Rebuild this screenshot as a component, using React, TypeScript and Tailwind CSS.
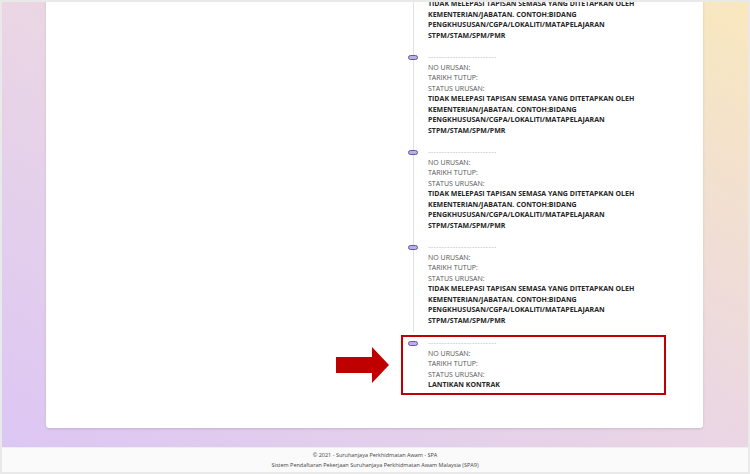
import React from "react";

const longStatus = [
  "TIDAK MELEPASI TAPISAN SEMASA YANG DITETAPKAN OLEH",
  "KEMENTERIAN/JABATAN. CONTOH:BIDANG",
  "PENGKHUSUSAN/CGPA/LOKALITI/MATAPELAJARAN",
  "STPM/STAM/SPM/PMR",
];

type Item = { status: string[] };

const items: Item[] = [
  { status: longStatus },
  { status: longStatus },
  { status: longStatus },
  { status: longStatus },
];

function Marker() {
  return (
    <span className="absolute left-[5px] top-[8px] w-[10px] h-[5px] rounded-full border-[1.5px] border-[#6255ad] bg-[#b9b1e4]" />
  );
}

function ItemBody({ status }: { status: string[] }) {
  return (
    <div className="flex-1 text-[7px] leading-[10.5px]" style={{ fontFamily: '"Open Sans", sans-serif' }}>
      <div className="text-[#b5b5b5] tracking-[0.5px]">-------------------------</div>
      <div className="text-[#555]">NO URUSAN:</div>
      <div className="text-[#555]">TARIKH TUTUP:</div>
      <div className="text-[#555]">STATUS URUSAN:</div>
      <div className="font-bold text-[#262626]">
        {status.map((line) => (
          <div key={line}>{line}</div>
        ))}
      </div>
    </div>
  );
}

function TimelineItem({ status }: Item) {
  return (
    <div className="flex w-[265px] px-[2px] pt-[5px] pb-[6px]">
      <div className="relative w-[20px] -mt-[5px] -mb-[6px] flex justify-center">
        <div className="w-px h-full bg-[#e2e2e2]" />
        <Marker />
      </div>
      <div className="w-[5px]" />
      <ItemBody status={status} />
    </div>
  );
}

function Arrow() {
  return (
    <svg width="53" height="36" viewBox="0 0 53 36">
      <polygon points="0,10 36,10 36,0 53,18 36,36 36,26 0,26" fill="#c00000" />
    </svg>
  );
}

export default function App() {
  return (
    <div className="w-[750px] h-[474px] overflow-hidden flex flex-col border-2 border-[#e9e9e9]">
      {/* background + card */}
      <div className="flex-1 overflow-hidden pl-[44px] pr-[45px] bg-linear-to-tr from-[#dcc6f4] via-[#ead6e4] to-[#f9e8bd]">
        <div className="-mt-[70px] pt-[20px] pb-[33px] bg-white rounded-[3px] shadow-sm">
          <div className="ml-[290px]">
            <div className="ml-[65px]">
              {items.map((it, i) => (
                <TimelineItem key={i} status={it.status} />
              ))}
            </div>
            <div className="flex items-center mt-[3px]">
              <div className="w-[65px]">
                <Arrow />
              </div>
              <div className="flex w-[265px] border-2 border-[#c00000] pt-[1px] pb-[2px]">
                <div className="relative w-[20px]">
                  <span className="absolute left-[5px] top-[3px] w-[10px] h-[5px] rounded-full border-[1.5px] border-[#6255ad] bg-[#b9b1e4]" />
                </div>
                <div className="w-[5px]" />
                <ItemBody status={["LANTIKAN KONTRAK"]} />
              </div>
            </div>
          </div>
        </div>
      </div>

      {/* footer */}
      <footer
        className="h-[25px] bg-[#fafafa] border-t border-[#eeeeee] pt-[2px] text-center text-[5.5px] leading-[10px] text-[#444]"
        style={{ fontFamily: '"Open Sans", sans-serif' }}
      >
        <div>© 2021 - Suruhanjaya Perkhidmatan Awam - SPA</div>
        <div>Sistem Pendaftaran Pekerjaan Suruhanjaya Perkhidmatan Awam Malaysia (SPA9)</div>
      </footer>
    </div>
  );
}
